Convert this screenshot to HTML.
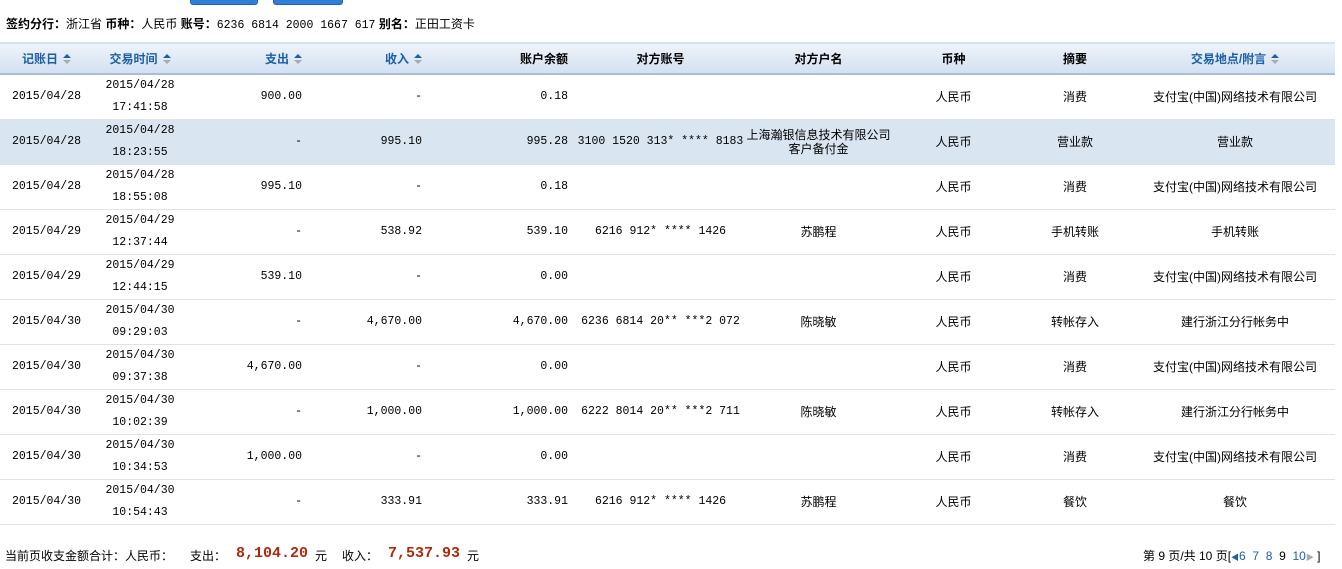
<!DOCTYPE html>
<html><head><meta charset="utf-8"><style>
*{margin:0;padding:0;box-sizing:border-box}
body{width:1342px;height:569px;background:#fff;font-family:"Liberation Sans","WenQuanYi Zen Hei","Noto Sans CJK SC",sans-serif;font-size:12px;color:#000;position:relative;overflow:hidden}
.btn{position:absolute;top:-8px;height:13px;background:#2f7fd6;border:1px solid #1d62b3;border-radius:3px}
.info{position:absolute;left:6px;top:15px;font-size:12px;white-space:nowrap}
.num{font-family:"Liberation Mono",monospace;font-size:11.5px}
table{position:absolute;left:0;top:42px;width:1335px;border-collapse:collapse;table-layout:fixed}
th{height:31px;background:linear-gradient(#eef3fa,#d3e1f1);border-top:2px solid #d5e2f1;border-bottom:2px solid #a9bdd9;font-weight:bold;font-size:12px;text-align:center}
th.s{color:#1b5fa8}
td{height:45px;border-bottom:1px solid #e2e2e2;text-align:center;font-size:12px;line-height:22px}
td.n{font-family:"Liberation Mono",monospace;font-size:11.5px}
td.r{text-align:right;padding-right:8px}
tr.h td{background:#dae5f2}
.ar{display:inline-block;vertical-align:middle;margin-left:5px;width:8px;height:11px;position:relative}
.ar:before{content:"";position:absolute;left:0;top:0;border:4px solid transparent;border-top:0;border-bottom:4px solid #1b5fa8}
.ar:after{content:"";position:absolute;left:0;top:6px;border:4px solid transparent;border-bottom:0;border-top:4px solid #aaa}
.f{position:absolute;top:547px;white-space:nowrap}
.red{color:#b0280c;font-family:"Liberation Mono",monospace;font-weight:bold;font-size:15px;top:545px}
.b{color:#1b5fa8}
</style></head><body>
<div class="btn" style="left:190px;width:68px"></div>
<div class="btn" style="left:273px;width:70px"></div>
<div class="info"><b>签约分行：</b>浙江省 <b>币种：</b>人民币 <b>账号：</b><span class="num">6236 6814 2000 1667 617</span> <b>别名：</b>正田工资卡</div>
<table>
<colgroup><col style="width:93px"><col style="width:94px"><col style="width:123px"><col style="width:120px"><col style="width:146px"><col style="width:169px"><col style="width:147px"><col style="width:123px"><col style="width:120px"><col style="width:200px"></colgroup>
<tr><th class="s">记账日<span class="ar"></span></th><th class="s">交易时间<span class="ar"></span></th><th class="s" style="text-align:right;padding-right:8px">支出<span class="ar"></span></th><th class="s" style="text-align:right;padding-right:8px">收入<span class="ar"></span></th><th style="text-align:right;padding-right:8px">账户余额</th><th>对方账号</th><th>对方户名</th><th>币种</th><th>摘要</th><th class="s">交易地点/附言<span class="ar"></span></th></tr>
<tr><td class="n">2015/04/28</td><td class="n">2015/04/28<br>17:41:58</td><td class="n r">900.00</td><td class="n r">-</td><td class="n r">0.18</td><td></td><td></td><td>人民币</td><td>消费</td><td>支付宝(中国)网络技术有限公司</td></tr>
<tr class="h"><td class="n">2015/04/28</td><td class="n">2015/04/28<br>18:23:55</td><td class="n r">-</td><td class="n r">995.10</td><td class="n r">995.28</td><td class="n">3100 1520 313* **** 8183</td><td style="line-height:14px">上海瀚银信息技术有限公司<br>客户备付金</td><td>人民币</td><td>营业款</td><td>营业款</td></tr>
<tr><td class="n">2015/04/28</td><td class="n">2015/04/28<br>18:55:08</td><td class="n r">995.10</td><td class="n r">-</td><td class="n r">0.18</td><td></td><td></td><td>人民币</td><td>消费</td><td>支付宝(中国)网络技术有限公司</td></tr>
<tr><td class="n">2015/04/29</td><td class="n">2015/04/29<br>12:37:44</td><td class="n r">-</td><td class="n r">538.92</td><td class="n r">539.10</td><td class="n">6216 912* **** 1426</td><td>苏鹏程</td><td>人民币</td><td>手机转账</td><td>手机转账</td></tr>
<tr><td class="n">2015/04/29</td><td class="n">2015/04/29<br>12:44:15</td><td class="n r">539.10</td><td class="n r">-</td><td class="n r">0.00</td><td></td><td></td><td>人民币</td><td>消费</td><td>支付宝(中国)网络技术有限公司</td></tr>
<tr><td class="n">2015/04/30</td><td class="n">2015/04/30<br>09:29:03</td><td class="n r">-</td><td class="n r">4,670.00</td><td class="n r">4,670.00</td><td class="n">6236 6814 20** ***2 072</td><td>陈晓敏</td><td>人民币</td><td>转帐存入</td><td>建行浙江分行帐务中</td></tr>
<tr><td class="n">2015/04/30</td><td class="n">2015/04/30<br>09:37:38</td><td class="n r">4,670.00</td><td class="n r">-</td><td class="n r">0.00</td><td></td><td></td><td>人民币</td><td>消费</td><td>支付宝(中国)网络技术有限公司</td></tr>
<tr><td class="n">2015/04/30</td><td class="n">2015/04/30<br>10:02:39</td><td class="n r">-</td><td class="n r">1,000.00</td><td class="n r">1,000.00</td><td class="n">6222 8014 20** ***2 711</td><td>陈晓敏</td><td>人民币</td><td>转帐存入</td><td>建行浙江分行帐务中</td></tr>
<tr><td class="n">2015/04/30</td><td class="n">2015/04/30<br>10:34:53</td><td class="n r">1,000.00</td><td class="n r">-</td><td class="n r">0.00</td><td></td><td></td><td>人民币</td><td>消费</td><td>支付宝(中国)网络技术有限公司</td></tr>
<tr><td class="n">2015/04/30</td><td class="n">2015/04/30<br>10:54:43</td><td class="n r">-</td><td class="n r">333.91</td><td class="n r">333.91</td><td class="n">6216 912* **** 1426</td><td>苏鹏程</td><td>人民币</td><td>餐饮</td><td>餐饮</td></tr>
</table>
<span class="f" style="left:5px">当前页收支金额合计：人民币：</span>
<span class="f" style="left:190px">支出：</span>
<span class="f red" style="left:236px">8,104.20</span>
<span class="f" style="left:315px">元</span>
<span class="f" style="left:342px">收入：</span>
<span class="f red" style="left:388px">7,537.93</span>
<span class="f" style="left:467px">元</span>
<span class="f" style="left:1143px">第 9 页/共 10 页[<span class="b" style="font-size:8px">◀</span><span class="b">6</span>&nbsp; <span class="b">7</span>&nbsp; <span class="b">8</span>&nbsp; 9&nbsp; <span class="b">10</span><span style="color:#aaa;font-size:8px">▶</span>&nbsp;]</span>
</body></html>
